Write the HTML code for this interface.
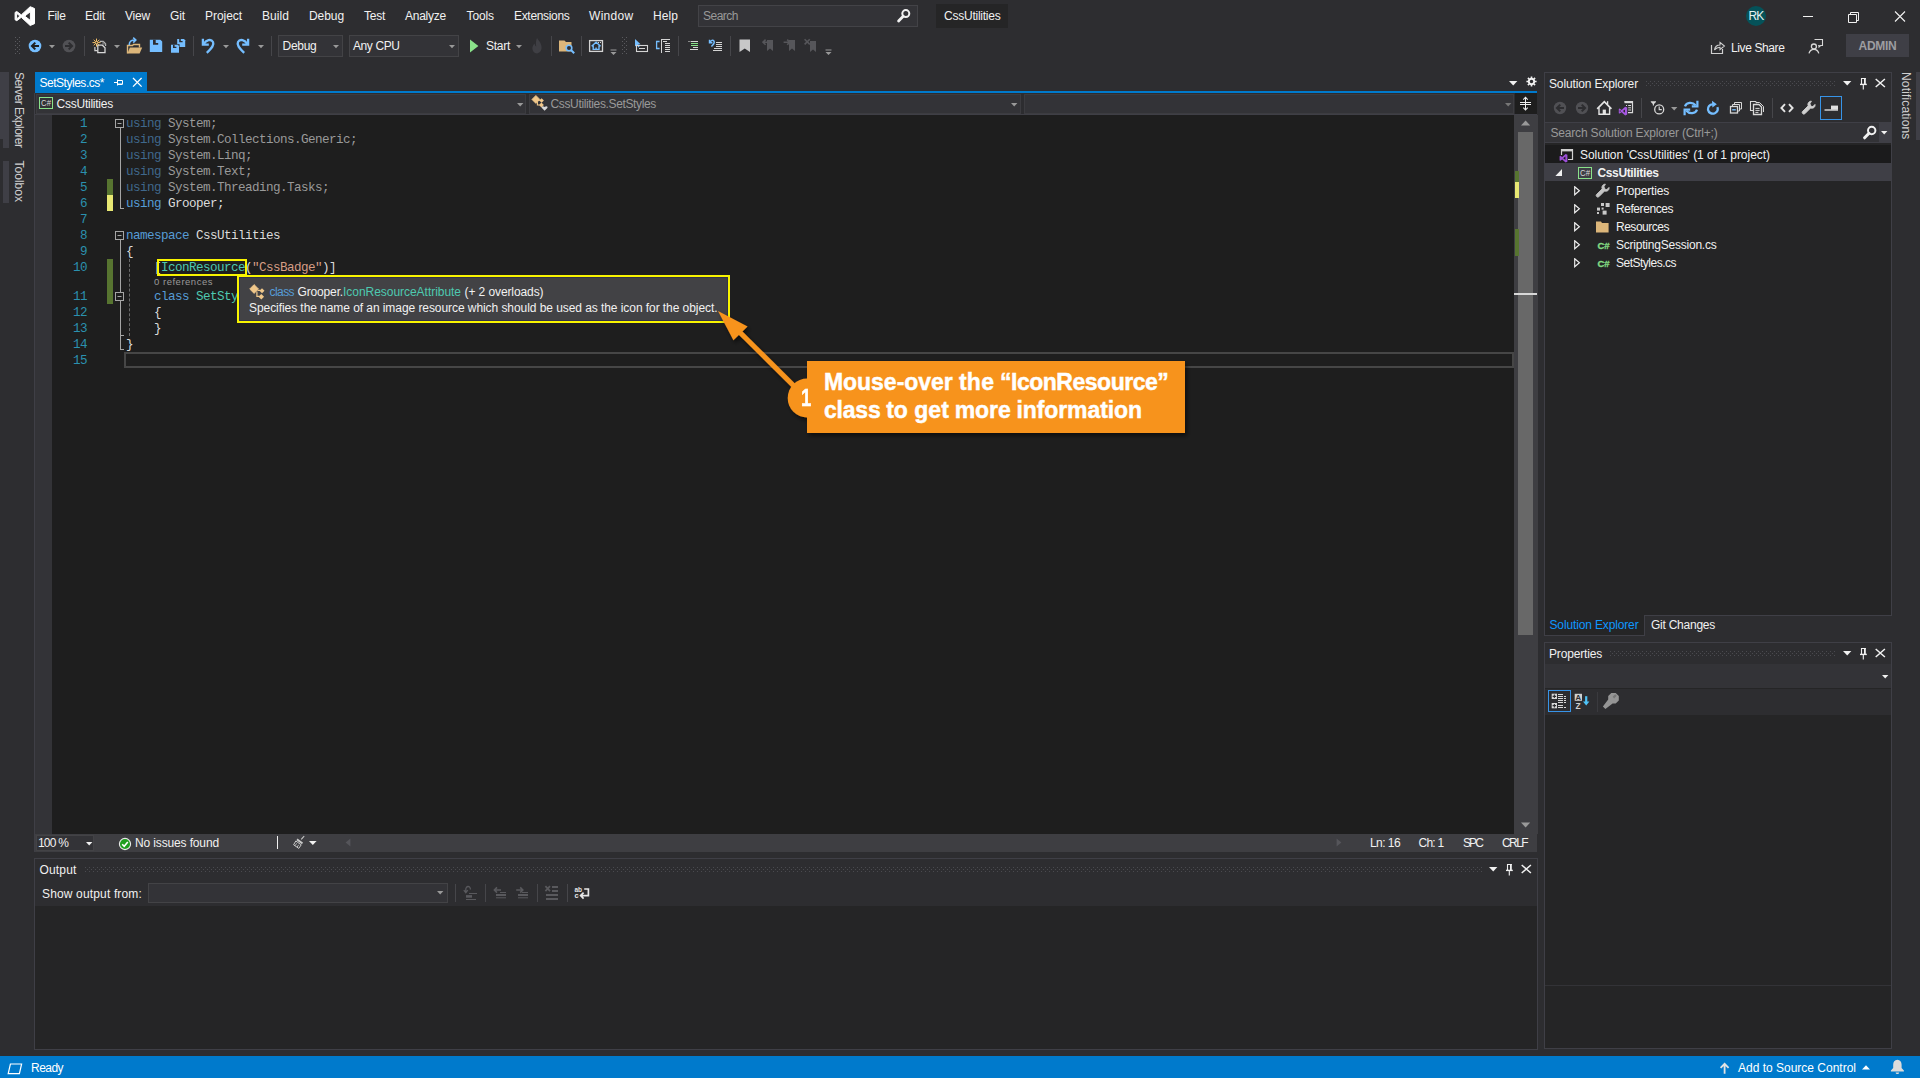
<!DOCTYPE html>
<html lang="en"><head><meta charset="utf-8"><title>CssUtilities - Microsoft Visual Studio</title>
<style>
html,body{margin:0;padding:0;background:#2d2d30;overflow:hidden}
#app{position:relative;width:1920px;height:1078px;background:#2d2d30;overflow:hidden;font-family:"Liberation Sans",sans-serif}
#app div,#app span,#app svg{position:absolute;display:block}
#app span{white-space:pre}
</style></head><body><div id="app">
<svg style="left:13px;top:5px;" width="24" height="22" viewBox="0 0 24 22"><path d="M17.2 1.7 L8.3 9.9 L3.8 6.5 L2.1 7.4 V14.8 L3.8 15.7 L8.3 12.3 L17.2 20.5 L21.5 18.7 V3.5 Z M3.6 13.9 V8.3 L6.9 11.1 Z M11.7 11.1 L17.4 6.7 V15.5 Z" fill="#ffffff" fill-rule="evenodd" stroke="#ffffff" stroke-width="1" stroke-linejoin="round"/></svg>
<span style="left:47.5px;top:7.84px;font:normal 12px/16px 'Liberation Sans', sans-serif;color:#f1f1f1;white-space:pre;letter-spacing:-0.336px;">File</span>
<span style="left:85px;top:7.84px;font:normal 12px/16px 'Liberation Sans', sans-serif;color:#f1f1f1;white-space:pre;letter-spacing:-0.172px;">Edit</span>
<span style="left:125px;top:7.84px;font:normal 12px/16px 'Liberation Sans', sans-serif;color:#f1f1f1;white-space:pre;letter-spacing:-0.199px;">View</span>
<span style="left:170px;top:7.84px;font:normal 12px/16px 'Liberation Sans', sans-serif;color:#f1f1f1;white-space:pre;letter-spacing:-0.115px;">Git</span>
<span style="left:205px;top:7.84px;font:normal 12px/16px 'Liberation Sans', sans-serif;color:#f1f1f1;white-space:pre;letter-spacing:-0.051px;">Project</span>
<span style="left:262px;top:7.84px;font:normal 12px/16px 'Liberation Sans', sans-serif;color:#f1f1f1;white-space:pre;letter-spacing:0.062px;">Build</span>
<span style="left:309px;top:7.84px;font:normal 12px/16px 'Liberation Sans', sans-serif;color:#f1f1f1;white-space:pre;letter-spacing:-0.075px;">Debug</span>
<span style="left:364px;top:7.84px;font:normal 12px/16px 'Liberation Sans', sans-serif;color:#f1f1f1;white-space:pre;letter-spacing:-0.254px;">Test</span>
<span style="left:405px;top:7.84px;font:normal 12px/16px 'Liberation Sans', sans-serif;color:#f1f1f1;white-space:pre;letter-spacing:-0.243px;">Analyze</span>
<span style="left:466.5px;top:7.84px;font:normal 12px/16px 'Liberation Sans', sans-serif;color:#f1f1f1;white-space:pre;letter-spacing:-0.103px;">Tools</span>
<span style="left:514px;top:7.84px;font:normal 12px/16px 'Liberation Sans', sans-serif;color:#f1f1f1;white-space:pre;letter-spacing:-0.320px;">Extensions</span>
<span style="left:589px;top:7.84px;font:normal 12px/16px 'Liberation Sans', sans-serif;color:#f1f1f1;white-space:pre;letter-spacing:0.302px;">Window</span>
<span style="left:653px;top:7.84px;font:normal 12px/16px 'Liberation Sans', sans-serif;color:#f1f1f1;white-space:pre;letter-spacing:0.078px;">Help</span>
<div style="left:698px;top:5px;width:220px;height:22px;background:#333337;border:1px solid #434347;box-sizing:border-box;"></div>
<span style="left:703px;top:7.84px;font:normal 12px/16px 'Liberation Sans', sans-serif;color:#999999;white-space:pre;letter-spacing:-0.505px;">Search</span>
<svg style="left:896px;top:8px;" width="16" height="16" viewBox="0 0 16 16"><circle cx="9.8" cy="5.6" r="3.5" fill="none" stroke="#f1f1f1" stroke-width="2"/><path d="M7.2 8.3 L2.6 13" stroke="#f1f1f1" stroke-width="2.8" stroke-linecap="round"/></svg>
<div style="left:936px;top:4px;width:72px;height:24px;background:#252526;"></div>
<span style="left:944px;top:7.84px;font:normal 12px/16px 'Liberation Sans', sans-serif;color:#f1f1f1;white-space:pre;letter-spacing:-0.237px;">CssUtilities</span>
<div style="left:1745.5px;top:6px;width:20px;height:20px;background:#055259;border-radius:10px;"></div>
<span style="left:1748.5px;top:7.84px;font:normal 12px/16px 'Liberation Sans', sans-serif;color:#e6f2f2;white-space:pre;letter-spacing:-0.836px;">RK</span>
<svg style="left:1800px;top:8px;" width="16" height="16" viewBox="0 0 16 16"><path d="M3 8.5 H13" stroke="#f1f1f1" stroke-width="1"/></svg>
<svg style="left:1846px;top:8.5px;" width="16" height="16" viewBox="0 0 16 16"><path d="M2.5 5.5 H10.5 V13.5 H2.5 Z M4.5 5.5 V3.5 H12.5 V11.5 H10.5" fill="none" stroke="#f1f1f1" stroke-width="1"/></svg>
<svg style="left:1892px;top:8px;" width="16" height="16" viewBox="0 0 16 16"><path d="M3 3.5 L13 13.5 M13 3.5 L3 13.5" stroke="#f1f1f1" stroke-width="1.1"/></svg>
<svg style="left:15px;top:37px;" width="5" height="18" viewBox="0 0 5 18"><rect x="0" y="0" width="1" height="1" fill="#5a5a5e"/><rect x="2" y="2" width="1" height="1" fill="#5a5a5e"/><rect x="4" y="0" width="1" height="1" fill="#5a5a5e"/><rect x="0" y="4" width="1" height="1" fill="#5a5a5e"/><rect x="2" y="6" width="1" height="1" fill="#5a5a5e"/><rect x="4" y="4" width="1" height="1" fill="#5a5a5e"/><rect x="0" y="8" width="1" height="1" fill="#5a5a5e"/><rect x="2" y="10" width="1" height="1" fill="#5a5a5e"/><rect x="4" y="8" width="1" height="1" fill="#5a5a5e"/><rect x="0" y="12" width="1" height="1" fill="#5a5a5e"/><rect x="2" y="14" width="1" height="1" fill="#5a5a5e"/><rect x="4" y="12" width="1" height="1" fill="#5a5a5e"/><rect x="0" y="16" width="1" height="1" fill="#5a5a5e"/><rect x="2" y="18" width="1" height="1" fill="#5a5a5e"/><rect x="4" y="16" width="1" height="1" fill="#5a5a5e"/></svg>
<svg style="left:27px;top:38px;" width="16" height="16" viewBox="0 0 16 16"><circle cx="8" cy="8" r="6.3" fill="#75beff"/><path d="M12 8 H5.4 M8.3 4.6 L4.9 8 L8.3 11.4" stroke="#1e1e1e" stroke-width="2" fill="none"/></svg>
<svg style="left:49px;top:45px;" width="7" height="4" viewBox="0 0 7 4"><path d="M0 0 H6 L3 3.2 Z" fill="#999999"/></svg>
<svg style="left:61px;top:38px;" width="16" height="16" viewBox="0 0 16 16"><circle cx="8" cy="8" r="6.3" fill="#515155"/><path d="M4 8 H10.6 M7.7 4.6 L11.1 8 L7.7 11.4" stroke="#2d2d30" stroke-width="2" fill="none"/></svg>
<div style="left:84px;top:36px;width:1px;height:20px;background:#46464a;"></div>
<svg style="left:92px;top:37px;" width="18" height="18" viewBox="0 0 18 18"><path d="M7.6 4.4 H11.2 L13.6 6.8 V9" fill="none" stroke="#b8b8b8" stroke-width="1.2"/>
    <path d="M11 4.4 V7 H13.6" fill="none" stroke="#8a8a8a" stroke-width="1"/>
    <path d="M2.9 10 V13.6 H5.4" fill="none" stroke="#d0d0d0" stroke-width="1.2"/>
    <path d="M5.8 8.2 H10.4 L13 10.8 V15.6 H5.8 Z" fill="#2d2d30" stroke="#d8d8d8" stroke-width="1.3"/>
    <path d="M4.5 1.6 V9.6 M0.5 5.6 H8.5 M1.7 2.8 L7.3 8.4 M7.3 2.8 L1.7 8.4" stroke="#f5c169" stroke-width="1"/><circle cx="4.5" cy="5.6" r="1.2" fill="#2d2d30" stroke="#f5c169" stroke-width="0.8"/></svg>
<svg style="left:114px;top:45px;" width="7" height="4" viewBox="0 0 7 4"><path d="M0 0 H6 L3 3.2 Z" fill="#999999"/></svg>
<svg style="left:126px;top:37px;" width="18" height="18" viewBox="0 0 18 18"><path d="M1.5 16.5 V8.5 H6.5 L7.5 7.5 H13.5 V10.5" fill="none" stroke="#dcb67a" stroke-width="1.4"/>
    <path d="M3.8 10.5 H16.2 L13.6 16.5 H1.5 Z" fill="#dcb67a"/>
    <path d="M3.2 8 C3.2 4 6 2.8 9.2 3 M7.2 0.6 L9.8 3 L7.2 5.6" fill="none" stroke="#75beff" stroke-width="1.6"/></svg>
<svg style="left:149px;top:39px;" width="14" height="14" viewBox="0 0 14 14"><path d="M0.8 0.7 H11.4 L13.2 2.5 V13 H0.8 Z" fill="#75beff"/><path d="M4 0.7 H6.7 V4 H9.2 V5.8 H4 Z" fill="#2d2d30"/></svg>
<svg style="left:170px;top:37px;" width="17" height="18" viewBox="0 0 17 18"><path d="M7.2 2 H14 L15.2 3.2 V10 H7.2 Z" fill="#75beff"/><path d="M9.2 2 H10.8 V4 H12.6 V5.2 H9.2 Z" fill="#2d2d30"/>
    <path d="M0.4 7.2 H9.6 V16.4 H0.4 Z" fill="#2d2d30"/><path d="M1 7.8 H7.8 L9 9 V15.8 H1 Z" fill="#75beff"/><path d="M3 7.8 H4.6 V9.8 H6.4 V11 H3 Z" fill="#2d2d30"/></svg>
<div style="left:193px;top:36px;width:1px;height:20px;background:#46464a;"></div>
<svg style="left:200px;top:37px;" width="16" height="18" viewBox="0 0 16 18"><path d="M2.9 1.8 V7.6 H8.8" fill="none" stroke="#75beff" stroke-width="2.3"/><path d="M3.6 7.2 C6 3 11 1.4 13 5 C14.5 8 12 11 6.8 15.8" fill="none" stroke="#75beff" stroke-width="2.3"/></svg>
<svg style="left:223px;top:45px;" width="7" height="4" viewBox="0 0 7 4"><path d="M0 0 H6 L3 3.2 Z" fill="#999999"/></svg>
<svg style="left:235px;top:37px;" width="16" height="18" viewBox="0 0 16 18"><path d="M13.1 1.8 V7.6 H7.2" fill="none" stroke="#75beff" stroke-width="2.3"/><path d="M12.4 7.2 C10 3 5 1.4 3 5 C1.5 8 4 11 9.2 15.8" fill="none" stroke="#75beff" stroke-width="2.3"/></svg>
<svg style="left:258px;top:45px;" width="7" height="4" viewBox="0 0 7 4"><path d="M0 0 H6 L3 3.2 Z" fill="#999999"/></svg>
<div style="left:271px;top:36px;width:1px;height:20px;background:#46464a;"></div>
<div style="left:278px;top:35px;width:65px;height:22px;background:#333337;border:1px solid #434346;box-sizing:border-box;"></div>
<span style="left:282.5px;top:37.84px;font:normal 12px/16px 'Liberation Sans', sans-serif;color:#f1f1f1;white-space:pre;letter-spacing:-0.275px;">Debug</span>
<svg style="left:333px;top:45px;" width="7" height="4" viewBox="0 0 7 4"><path d="M0 0 H6 L3 3.2 Z" fill="#999999"/></svg>
<div style="left:349px;top:35px;width:110px;height:22px;background:#333337;border:1px solid #434346;box-sizing:border-box;"></div>
<span style="left:353px;top:37.84px;font:normal 12px/16px 'Liberation Sans', sans-serif;color:#f1f1f1;white-space:pre;letter-spacing:-0.408px;">Any CPU</span>
<svg style="left:449px;top:45px;" width="7" height="4" viewBox="0 0 7 4"><path d="M0 0 H6 L3 3.2 Z" fill="#999999"/></svg>
<svg style="left:469px;top:39px;" width="10" height="14" viewBox="0 0 10 14"><path d="M1 0.6 L9.4 7 L1 13.4 Z" fill="#8ae28a"/></svg>
<span style="left:486px;top:37.84px;font:normal 12px/16px 'Liberation Sans', sans-serif;color:#f1f1f1;white-space:pre;letter-spacing:-0.269px;">Start</span>
<svg style="left:516px;top:45px;" width="7" height="4" viewBox="0 0 7 4"><path d="M0 0 H6 L3 3.2 Z" fill="#999999"/></svg>
<svg style="left:531px;top:37px;" width="12" height="18" viewBox="0 0 12 18"><path d="M6 1 C8 4 10.6 6.4 10.6 10.6 C10.6 14 8.4 16.4 6 16.4 C3.4 16.4 1.4 14.2 1.4 11 C1.4 9 2.6 7.4 3.6 6.4 C3.8 8 4.4 9 5.2 9.4 C4.6 6 5 3 6 1 Z" fill="#3f3f44"/></svg>
<div style="left:551px;top:36px;width:1px;height:20px;background:#46464a;"></div>
<svg style="left:558px;top:38px;" width="18" height="18" viewBox="0 0 18 18"><path d="M1 2.5 H6.5 L8 4 H13.5 V13.5 H1 Z" fill="#dcb67a"/><circle cx="11" cy="10" r="2.8" fill="#2d2d30" stroke="#75beff" stroke-width="1.6"/><path d="M13 12 L16.2 15.2" stroke="#75beff" stroke-width="2"/></svg>
<div style="left:581px;top:36px;width:1px;height:20px;background:#46464a;"></div>
<svg style="left:588px;top:39px;" width="16" height="14" viewBox="0 0 16 14"><rect x="1.6" y="1.6" width="12.9" height="10.8" fill="none" stroke="#d4d4d4" stroke-width="1.3"/><path d="M3.6 7.2 L8.1 3.3 L12.6 7.2 M5.2 6.4 V10.4 H11 V6.4 M8.1 10.4 V8.4" fill="none" stroke="#75beff" stroke-width="1.4"/><rect x="10" y="3" width="1" height="1" fill="#d4d4d4"/><rect x="12" y="3" width="1" height="1" fill="#d4d4d4"/></svg>
<svg style="left:610px;top:49px;" width="8" height="7" viewBox="0 0 8 7"><path d="M0.5 0.5 H6.5 V1.5 H0.5 Z M0.5 3 H6.5 L3.5 6 Z" fill="#999"/></svg>
<svg style="left:622px;top:37px;" width="5" height="18" viewBox="0 0 5 18"><rect x="0" y="0" width="1" height="1" fill="#5a5a5e"/><rect x="2" y="2" width="1" height="1" fill="#5a5a5e"/><rect x="4" y="0" width="1" height="1" fill="#5a5a5e"/><rect x="0" y="4" width="1" height="1" fill="#5a5a5e"/><rect x="2" y="6" width="1" height="1" fill="#5a5a5e"/><rect x="4" y="4" width="1" height="1" fill="#5a5a5e"/><rect x="0" y="8" width="1" height="1" fill="#5a5a5e"/><rect x="2" y="10" width="1" height="1" fill="#5a5a5e"/><rect x="4" y="8" width="1" height="1" fill="#5a5a5e"/><rect x="0" y="12" width="1" height="1" fill="#5a5a5e"/><rect x="2" y="14" width="1" height="1" fill="#5a5a5e"/><rect x="4" y="12" width="1" height="1" fill="#5a5a5e"/><rect x="0" y="16" width="1" height="1" fill="#5a5a5e"/><rect x="2" y="18" width="1" height="1" fill="#5a5a5e"/><rect x="4" y="16" width="1" height="1" fill="#5a5a5e"/></svg>
<svg style="left:633px;top:38px;" width="18" height="16" viewBox="0 0 18 16"><path d="M2 1 V8.6 L4 7 L5.4 9.4 L6.6 8.6 L5.2 6.4 L7.6 6.2 Z" fill="#75beff"/><rect x="3.5" y="7.5" width="11" height="6" fill="none" stroke="#d4d4d4" stroke-width="1.1"/><path d="M6 10.5 H12" stroke="#d4d4d4" stroke-width="1"/></svg>
<svg style="left:655px;top:38px;" width="18" height="16" viewBox="0 0 18 16"><path d="M4.6 3.5 H1.6 V10.5 H4.6" fill="none" stroke="#75beff" stroke-width="1.3"/><path d="M6.5 1 V15 M6.5 1.5 H15 M8 3.5 H12 M10 5.5 H15 M10 7.5 H15 M10 9.5 H15 M10 11.5 H15 M10 13.5 H15" fill="none" stroke="#d4d4d4" stroke-width="1"/></svg>
<div style="left:678px;top:36px;width:1px;height:20px;background:#46464a;"></div>
<svg style="left:687px;top:40px;" width="14" height="12" viewBox="0 0 14 12"><path d="M1 1.5 H3" stroke="#8a8a8a" stroke-width="1"/><path d="M3.6 1.5 H11 M6 7.5 H11 M3 9.5 H11" stroke="#d4d4d4" stroke-width="1"/><path d="M4 3.5 H11 M4 5.5 H11" stroke="#8ae28a" stroke-width="1"/></svg>
<svg style="left:708px;top:39px;" width="16" height="14" viewBox="0 0 16 14"><path d="M1.5 0.8 V3.8 H4.4" fill="none" stroke="#75beff" stroke-width="1.4"/><path d="M2 3.4 C3 0.4 6.6 0.8 6.2 3.6 C6 5.2 4.8 6 3.4 7.6" fill="none" stroke="#75beff" stroke-width="1.5"/><path d="M8 3.5 H14 M8 5.5 H14 M8 7.5 H14 M6 9.5 H14 M5 11.5 H14" stroke="#d4d4d4" stroke-width="1"/></svg>
<div style="left:730px;top:36px;width:1px;height:20px;background:#46464a;"></div>
<svg style="left:739px;top:39px;" width="12" height="14" viewBox="0 0 12 14"><path d="M0.5 0.5 H11 V13 L5.75 9.6 L0.5 13 Z" fill="#c8c8c8"/></svg>
<svg style="left:762px;top:38px;" width="13" height="15" viewBox="0 0 13 15"><path d="M5 2 H11 V13 L8 10.6 L5 13 Z" fill="#56565a"/><path d="M7 4.2 H1.2 M3.6 1.6 L1 4.2 L3.6 6.8" stroke="#56565a" stroke-width="1.6" fill="none"/></svg>
<svg style="left:783px;top:38px;" width="13" height="15" viewBox="0 0 13 15"><path d="M6 2 H12 V13 L9 10.6 L6 13 Z" fill="#56565a"/><path d="M0.6 4.2 H6.6 M4.2 1.6 L6.8 4.2 L4.2 6.8" stroke="#56565a" stroke-width="1.6" fill="none"/></svg>
<svg style="left:804px;top:38px;" width="13" height="15" viewBox="0 0 13 15"><path d="M6 3 H12 V14 L9 11.6 L6 14 Z" fill="#56565a"/><path d="M0.6 1.2 L5.8 6.4 M5.8 1.2 L0.6 6.4" stroke="#56565a" stroke-width="1.6" fill="none"/></svg>
<svg style="left:825px;top:49px;" width="8" height="7" viewBox="0 0 8 7"><path d="M0.5 0.5 H6.5 V1.5 H0.5 Z M0.5 3 H6.5 L3.5 6 Z" fill="#999"/></svg>
<svg style="left:1708px;top:39px;" width="18" height="16" viewBox="0 0 18 16"><path d="M3.5 6 V14.5 H14.5 V10" fill="none" stroke="#d0d0d0" stroke-width="1.2"/><path d="M6.5 11 C7 7.6 9.4 6 12 6 V3.4 L16.4 7 L12 10.6 V8.2 C9.6 8.2 8 9 6.5 11 Z" fill="none" stroke="#d0d0d0" stroke-width="1.1"/></svg>
<span style="left:1731px;top:40.34px;font:normal 12px/16px 'Liberation Sans', sans-serif;color:#f1f1f1;white-space:pre;letter-spacing:-0.388px;">Live Share</span>
<svg style="left:1808px;top:37px;" width="18" height="18" viewBox="0 0 18 18"><path d="M6.5 2.5 H14.5 V8.5 H12.6 L11 10 V8.5 H10.2" fill="none" stroke="#d8d8d8" stroke-width="1.1"/><circle cx="5.9" cy="9.5" r="2.5" fill="none" stroke="#d8d8d8" stroke-width="1.3"/><path d="M1 16.4 C1.8 13.6 3.6 12.4 5.9 12.4 C8.2 12.4 10 13.6 10.8 16.4" fill="none" stroke="#d8d8d8" stroke-width="1.3"/></svg>
<div style="left:1846px;top:34px;width:63px;height:23px;background:#3f3f46;"></div>
<span style="left:1858.5px;top:38.34px;font:bold 12px/16px 'Liberation Sans', sans-serif;color:#9d9da1;white-space:pre;letter-spacing:-0.266px;">ADMIN</span>
<div style="left:3px;top:72px;width:6px;height:76px;background:#3f3f46;"></div>
<div style="left:0px;top:72px;width:3px;height:67px;background:#3f3f46;"></div>
<div style="left:3px;top:161px;width:6px;height:42px;background:#3f3f46;"></div>
<span style="left:0;top:0;font:normal 12px/16px 'Liberation Sans', sans-serif;color:#d0d0d0;white-space:pre;transform-origin:0 0;transform:translate(26.8px,72px) rotate(90deg);letter-spacing:-0.525px;">Server Explorer</span>
<span style="left:0;top:0;font:normal 12px/16px 'Liberation Sans', sans-serif;color:#d0d0d0;white-space:pre;transform-origin:0 0;transform:translate(26.8px,160.5px) rotate(90deg);letter-spacing:0.018px;">Toolbox</span>
<div style="left:35px;top:72px;width:112px;height:19px;background:#007acc;"></div>
<span style="left:39.5px;top:74.84px;font:normal 12px/16px 'Liberation Sans', sans-serif;color:#ffffff;white-space:pre;letter-spacing:-0.477px;">SetStyles.cs*</span>
<svg style="left:113px;top:77px;" width="12" height="11" viewBox="0 0 12 11"><path d="M1 5.5 H4.5 M4.5 2.5 V8.5 M4.5 3.5 H9.5 V7 H4.5 M4.5 7.5 H9.5" fill="none" stroke="#ffffff" stroke-width="1"/></svg>
<svg style="left:132px;top:77px;" width="11" height="11" viewBox="0 0 11 11"><path d="M1 1 L9.6 9.6 M9.6 1 L1 9.6" stroke="#ffffff" stroke-width="1.3"/></svg>
<div style="left:35px;top:91px;width:1502px;height:2px;background:#007acc;"></div>
<svg style="left:1509px;top:81px;" width="9" height="5" viewBox="0 0 9 5"><path d="M0 0 H8.4 L4.2 4.4 Z" fill="#f1f1f1"/></svg>
<svg style="left:1525.5px;top:75.5px;" width="11" height="11" viewBox="0 0 11 11"><circle cx="5.5" cy="5.5" r="2.7" fill="none" stroke="#f1f1f1" stroke-width="1.9"/><path d="M5.5 0.4 V2 M5.5 9 V10.6 M0.4 5.5 H2 M9 5.5 H10.6 M1.9 1.9 L3 3 M8 8 L9.1 9.1 M9.1 1.9 L8 3 M3 8 L1.9 9.1" stroke="#f1f1f1" stroke-width="1.6"/></svg>
<div style="left:35px;top:93px;width:1502px;height:22px;background:#2d2d30;"></div>
<div style="left:35px;top:114px;width:1502px;height:1px;background:#3f3f46;"></div>
<div style="left:36px;top:94px;width:490px;height:20px;background:#333337;border:1px solid #3c3c40;box-sizing:border-box;"></div>
<div style="left:529px;top:94px;width:492px;height:20px;background:#333337;border:1px solid #3c3c40;box-sizing:border-box;"></div>
<div style="left:1024px;top:94px;width:490px;height:20px;background:#333337;border:1px solid #3c3c40;box-sizing:border-box;"></div>
<svg style="left:39px;top:97px" width="15" height="13" viewBox="0 0 15 13"><rect x="0.5" y="0.5" width="13" height="11" fill="none" stroke="#8ae28a" stroke-width="1"/><text x="2" y="9.2" font-family="Liberation Sans, sans-serif" font-size="8.6" fill="#d8d8d8" textLength="10" lengthAdjust="spacingAndGlyphs">C#</text></svg>
<span style="left:56.5px;top:95.84px;font:normal 12px/16px 'Liberation Sans', sans-serif;color:#f1f1f1;white-space:pre;letter-spacing:-0.237px;">CssUtilities</span>
<svg style="left:517px;top:103px;" width="7" height="4" viewBox="0 0 7 4"><path d="M0 0 H6.4 L3.2 3.4 Z" fill="#999"/></svg>
<svg style="left:531px;top:94px;" width="18" height="18" viewBox="0 0 18 18"><path d="M4.9 1.4 L8.9 5.4 L4.9 9.4 L0.9 5.4 Z" fill="#f0c78a" stroke="#f0c78a" stroke-width="0.7" stroke-linejoin="round"/><path d="M10.6 4.2 L12.9 6.5 L10.6 8.8 L8.3 6.5 Z" fill="#f0c78a"/><path d="M10.4 8.6 L12.8 11 L10.4 13.4 L8 11 Z" fill="#f0c78a"/><path d="M7 6.3 H9 M6.4 7.4 V11 H8.6" fill="none" stroke="#f0c78a" stroke-width="1.1"/>
    <path d="M13.6 16.8 L10.9 14 C9.9 12.6 11.8 11.2 13.6 13 C15.4 11.2 17.3 12.6 16.3 14 Z" fill="#d8d8d8"/></svg>
<span style="left:550.5px;top:95.84px;font:normal 12px/16px 'Liberation Sans', sans-serif;color:#999999;white-space:pre;letter-spacing:-0.358px;">CssUtilities.SetStyles</span>
<svg style="left:1011px;top:103px;" width="7" height="4" viewBox="0 0 7 4"><path d="M0 0 H6.4 L3.2 3.4 Z" fill="#999"/></svg>
<svg style="left:1504.5px;top:103px;" width="7" height="4" viewBox="0 0 7 4"><path d="M0 0 H6.4 L3.2 3.4 Z" fill="#777"/></svg>
<div style="left:1515px;top:93px;width:22px;height:21px;background:#1e1e1e;"></div>
<svg style="left:1519px;top:96px;" width="14" height="16" viewBox="0 0 14 16"><path d="M6.5 1.2 V14 M1 6.5 H12 M1 8.5 H12" stroke="#f1f1f1" stroke-width="1"/><path d="M4.3 3.6 L6.5 1.2 L8.7 3.6 M4.3 11.6 L6.5 14 L8.7 11.6" fill="none" stroke="#f1f1f1" stroke-width="1.1"/></svg>
<div style="left:35px;top:115px;width:1480px;height:719px;background:#1e1e1e;"></div>
<div style="left:35px;top:115px;width:17px;height:719px;background:#333337;"></div>
<div style="left:34px;top:93px;width:1px;height:759px;background:#3f3f46;"></div>
<div style="left:1514px;top:115px;width:24px;height:719px;background:#3e3e42;"></div>
<svg style="left:1521px;top:120px;" width="10" height="6" viewBox="0 0 10 6"><path d="M0 5.4 L4.6 0.4 L9.2 5.4 Z" fill="#999"/></svg>
<svg style="left:1521px;top:822px;" width="10" height="6" viewBox="0 0 10 6"><path d="M0 0.4 L4.6 5.4 L9.2 0.4 Z" fill="#999"/></svg>
<div style="left:1518px;top:132px;width:15px;height:503px;background:#686868;"></div>
<div style="left:1515px;top:171px;width:4px;height:11px;background:#577430;"></div>
<div style="left:1515px;top:182px;width:4px;height:16px;background:#e8e873;"></div>
<div style="left:1515px;top:229px;width:4px;height:27px;background:#577430;"></div>
<div style="left:1514px;top:293px;width:23px;height:2px;background:#d8d8d8;"></div>
<div style="left:107px;top:179px;width:6px;height:16px;background:#577430;"></div>
<div style="left:107px;top:195px;width:6px;height:16px;background:#e8e873;"></div>
<div style="left:107px;top:259px;width:6px;height:45px;background:#577430;"></div>
<span style="left:80px;top:115.64px;font:normal 12.6px/16px 'Liberation Mono', monospace;color:#2b91af;white-space:pre;letter-spacing:0;letter-spacing:-0.562px;">1</span>
<span style="left:126px;top:115.64px;font:normal 12.6px/16px 'Liberation Mono', monospace;color:#40688c;white-space:pre;letter-spacing:-0.559px;">using</span>
<span style="left:168px;top:115.64px;font:normal 12.6px/16px 'Liberation Mono', monospace;color:#9a9a9a;white-space:pre;letter-spacing:-0.558px;">System;</span>
<span style="left:80px;top:131.64px;font:normal 12.6px/16px 'Liberation Mono', monospace;color:#2b91af;white-space:pre;letter-spacing:0;letter-spacing:-0.562px;">2</span>
<span style="left:126px;top:131.64px;font:normal 12.6px/16px 'Liberation Mono', monospace;color:#40688c;white-space:pre;letter-spacing:-0.559px;">using</span>
<span style="left:168px;top:131.64px;font:normal 12.6px/16px 'Liberation Mono', monospace;color:#9a9a9a;white-space:pre;letter-spacing:-0.558px;">System.Collections.Generic;</span>
<span style="left:80px;top:147.64px;font:normal 12.6px/16px 'Liberation Mono', monospace;color:#2b91af;white-space:pre;letter-spacing:0;letter-spacing:-0.562px;">3</span>
<span style="left:126px;top:147.64px;font:normal 12.6px/16px 'Liberation Mono', monospace;color:#40688c;white-space:pre;letter-spacing:-0.559px;">using</span>
<span style="left:168px;top:147.64px;font:normal 12.6px/16px 'Liberation Mono', monospace;color:#9a9a9a;white-space:pre;letter-spacing:-0.559px;">System.Linq;</span>
<span style="left:80px;top:163.64px;font:normal 12.6px/16px 'Liberation Mono', monospace;color:#2b91af;white-space:pre;letter-spacing:0;letter-spacing:-0.562px;">4</span>
<span style="left:126px;top:163.64px;font:normal 12.6px/16px 'Liberation Mono', monospace;color:#40688c;white-space:pre;letter-spacing:-0.559px;">using</span>
<span style="left:168px;top:163.64px;font:normal 12.6px/16px 'Liberation Mono', monospace;color:#9a9a9a;white-space:pre;letter-spacing:-0.559px;">System.Text;</span>
<span style="left:80px;top:179.64px;font:normal 12.6px/16px 'Liberation Mono', monospace;color:#2b91af;white-space:pre;letter-spacing:0;letter-spacing:-0.562px;">5</span>
<span style="left:126px;top:179.64px;font:normal 12.6px/16px 'Liberation Mono', monospace;color:#40688c;white-space:pre;letter-spacing:-0.559px;">using</span>
<span style="left:168px;top:179.64px;font:normal 12.6px/16px 'Liberation Mono', monospace;color:#9a9a9a;white-space:pre;letter-spacing:-0.558px;">System.Threading.Tasks;</span>
<span style="left:80px;top:195.64px;font:normal 12.6px/16px 'Liberation Mono', monospace;color:#2b91af;white-space:pre;letter-spacing:0;letter-spacing:-0.562px;">6</span>
<span style="left:126px;top:195.64px;font:normal 12.6px/16px 'Liberation Mono', monospace;color:#569cd6;white-space:pre;letter-spacing:-0.559px;">using</span>
<span style="left:168px;top:195.64px;font:normal 12.6px/16px 'Liberation Mono', monospace;color:#dcdcdc;white-space:pre;letter-spacing:-0.559px;">Grooper;</span>
<span style="left:80px;top:211.64px;font:normal 12.6px/16px 'Liberation Mono', monospace;color:#2b91af;white-space:pre;letter-spacing:0;letter-spacing:-0.562px;">7</span>
<span style="left:80px;top:227.64px;font:normal 12.6px/16px 'Liberation Mono', monospace;color:#2b91af;white-space:pre;letter-spacing:0;letter-spacing:-0.562px;">8</span>
<span style="left:126px;top:227.64px;font:normal 12.6px/16px 'Liberation Mono', monospace;color:#569cd6;white-space:pre;letter-spacing:-0.559px;">namespace</span>
<span style="left:196px;top:227.64px;font:normal 12.6px/16px 'Liberation Mono', monospace;color:#dcdcdc;white-space:pre;letter-spacing:-0.559px;">CssUtilities</span>
<span style="left:80px;top:243.64px;font:normal 12.6px/16px 'Liberation Mono', monospace;color:#2b91af;white-space:pre;letter-spacing:0;letter-spacing:-0.562px;">9</span>
<span style="left:126px;top:243.64px;font:normal 12.6px/16px 'Liberation Mono', monospace;color:#dcdcdc;white-space:pre;letter-spacing:-0.562px;">{</span>
<span style="left:73px;top:259.64px;font:normal 12.6px/16px 'Liberation Mono', monospace;color:#2b91af;white-space:pre;letter-spacing:0;letter-spacing:-0.562px;">10</span>
<span style="left:126px;top:259.64px;font:normal 12.6px/16px 'Liberation Mono', monospace;color:#dcdcdc;white-space:pre;letter-spacing:-0.559px;">    [</span>
<span style="left:161px;top:259.64px;font:normal 12.6px/16px 'Liberation Mono', monospace;color:#4ec9b0;white-space:pre;letter-spacing:-0.559px;">IconResource</span>
<span style="left:245px;top:259.64px;font:normal 12.6px/16px 'Liberation Mono', monospace;color:#dcdcdc;white-space:pre;letter-spacing:-0.562px;">(</span>
<span style="left:252px;top:259.64px;font:normal 12.6px/16px 'Liberation Mono', monospace;color:#d69d85;white-space:pre;letter-spacing:-0.558px;">"CssBadge"</span>
<span style="left:322px;top:259.64px;font:normal 12.6px/16px 'Liberation Mono', monospace;color:#dcdcdc;white-space:pre;letter-spacing:-0.562px;">)]</span>
<span style="left:154px;top:273.71px;font:normal 9.5px/16px 'Liberation Sans', sans-serif;color:#999999;white-space:pre;letter-spacing:0.516px;">0 references</span>
<span style="left:73px;top:288.64px;font:normal 12.6px/16px 'Liberation Mono', monospace;color:#2b91af;white-space:pre;letter-spacing:0;letter-spacing:-0.562px;">11</span>
<span style="left:154px;top:288.64px;font:normal 12.6px/16px 'Liberation Mono', monospace;color:#569cd6;white-space:pre;letter-spacing:-0.559px;">class</span>
<span style="left:196px;top:288.64px;font:normal 12.6px/16px 'Liberation Mono', monospace;color:#4ec9b0;white-space:pre;letter-spacing:-0.559px;">SetStyles</span>
<span style="left:73px;top:304.64px;font:normal 12.6px/16px 'Liberation Mono', monospace;color:#2b91af;white-space:pre;letter-spacing:0;letter-spacing:-0.562px;">12</span>
<span style="left:126px;top:304.64px;font:normal 12.6px/16px 'Liberation Mono', monospace;color:#dcdcdc;white-space:pre;letter-spacing:-0.559px;">    {</span>
<span style="left:73px;top:320.64px;font:normal 12.6px/16px 'Liberation Mono', monospace;color:#2b91af;white-space:pre;letter-spacing:0;letter-spacing:-0.562px;">13</span>
<span style="left:126px;top:320.64px;font:normal 12.6px/16px 'Liberation Mono', monospace;color:#dcdcdc;white-space:pre;letter-spacing:-0.559px;">    }</span>
<span style="left:73px;top:336.64px;font:normal 12.6px/16px 'Liberation Mono', monospace;color:#2b91af;white-space:pre;letter-spacing:0;letter-spacing:-0.562px;">14</span>
<span style="left:126px;top:336.64px;font:normal 12.6px/16px 'Liberation Mono', monospace;color:#dcdcdc;white-space:pre;letter-spacing:-0.562px;">}</span>
<span style="left:73px;top:352.64px;font:normal 12.6px/16px 'Liberation Mono', monospace;color:#2b91af;white-space:pre;letter-spacing:0;letter-spacing:-0.562px;">15</span>
<div style="left:120px;top:128px;width:1px;height:81px;background:#a5a5a5;"></div>
<div style="left:120px;top:208px;width:4px;height:1px;background:#a5a5a5;"></div>
<div style="left:120px;top:240px;width:1px;height:110px;background:#a5a5a5;"></div>
<div style="left:120px;top:349px;width:4px;height:1px;background:#a5a5a5;"></div>
<div style="left:120px;top:335px;width:4px;height:1px;background:#a5a5a5;"></div>
<svg style="left:115px;top:119px;" width="10" height="10" viewBox="0 0 10 10"><rect x="0.5" y="0.5" width="8" height="8" fill="#1e1e1e" stroke="#a5a5a5" stroke-width="1"/><path d="M2.5 4.5 H6.5" stroke="#a5a5a5" stroke-width="1"/></svg>
<svg style="left:115px;top:231px;" width="10" height="10" viewBox="0 0 10 10"><rect x="0.5" y="0.5" width="8" height="8" fill="#1e1e1e" stroke="#a5a5a5" stroke-width="1"/><path d="M2.5 4.5 H6.5" stroke="#a5a5a5" stroke-width="1"/></svg>
<svg style="left:115px;top:292px;" width="10" height="10" viewBox="0 0 10 10"><rect x="0.5" y="0.5" width="8" height="8" fill="#1e1e1e" stroke="#a5a5a5" stroke-width="1"/><path d="M2.5 4.5 H6.5" stroke="#a5a5a5" stroke-width="1"/></svg>
<div style="left:129px;top:259px;width:0;height:77px;border-left:1px dashed #6a6a6a;"></div>
<div style="left:124px;top:352px;width:1390px;height:16px;border:2px solid #464646;box-sizing:border-box;"></div>
<div style="left:35px;top:834px;width:1502px;height:18px;background:#3e3e42;"></div>
<div style="left:36px;top:835px;width:58px;height:16px;background:#333337;border:1px solid #434346;box-sizing:border-box;"></div>
<span style="left:38px;top:835.34px;font:normal 12px/16px 'Liberation Sans', sans-serif;color:#f1f1f1;white-space:pre;letter-spacing:-0.806px;">100 %</span>
<svg style="left:86px;top:842px;" width="7" height="4" viewBox="0 0 7 4"><path d="M0 0 H6.4 L3.2 3.4 Z" fill="#f1f1f1"/></svg>
<svg style="left:118px;top:836.5px;" width="14" height="14" viewBox="0 0 14 14"><circle cx="7" cy="7" r="5.6" fill="#1f9e1f" stroke="#e8e8e8" stroke-width="1.1"/><path d="M4.2 7.2 L6.2 9.2 L9.8 5" fill="none" stroke="#fff" stroke-width="1.6"/></svg>
<span style="left:135px;top:835.34px;font:normal 12px/16px 'Liberation Sans', sans-serif;color:#f1f1f1;white-space:pre;letter-spacing:-0.138px;">No issues found</span>
<div style="left:277px;top:836px;width:1px;height:13px;background:#f1f1f1;"></div>
<svg style="left:291px;top:835px;" width="15" height="15" viewBox="0 0 15 15"><path d="M13.2 1.2 L10.2 4.4" stroke="#c8c8c8" stroke-width="1.1"/><path d="M6.4 3.6 L12 7.6 L11 9.2 L5.4 5.2 Z" fill="#c8c8c8"/><path d="M4.8 6 L10.2 9.8 L7.8 13.4 L2.6 9.8 Z" fill="none" stroke="#c8c8c8" stroke-width="1"/><path d="M5.6 8.4 L4.2 10.6 M7.6 9.8 L6.2 12" stroke="#c8c8c8" stroke-width="0.9"/></svg>
<svg style="left:309px;top:841px;" width="8" height="5" viewBox="0 0 8 5"><path d="M0 0 H7.6 L3.8 4 Z" fill="#f1f1f1"/></svg>
<svg style="left:345px;top:838px;" width="6" height="9" viewBox="0 0 6 9"><path d="M5.4 0.4 L0.6 4.5 L5.4 8.6 Z" fill="#55555a"/></svg>
<svg style="left:1336px;top:838px;" width="6" height="9" viewBox="0 0 6 9"><path d="M0.6 0.4 L5.4 4.5 L0.6 8.6 Z" fill="#55555a"/></svg>
<span style="left:1370px;top:835.34px;font:normal 12px/16px 'Liberation Sans', sans-serif;color:#f1f1f1;white-space:pre;letter-spacing:-0.562px;">Ln: 16</span>
<span style="left:1418.5px;top:835.34px;font:normal 12px/16px 'Liberation Sans', sans-serif;color:#f1f1f1;white-space:pre;letter-spacing:-0.738px;">Ch: 1</span>
<span style="left:1463px;top:835.34px;font:normal 12px/16px 'Liberation Sans', sans-serif;color:#f1f1f1;white-space:pre;letter-spacing:-1.896px;">SPC</span>
<span style="left:1502px;top:835.34px;font:normal 12px/16px 'Liberation Sans', sans-serif;color:#f1f1f1;white-space:pre;letter-spacing:-1.586px;">CRLF</span>
<div style="left:34px;top:858px;width:1504px;height:192px;background:#252526;border:1px solid #3f3f46;box-sizing:border-box;"></div>
<div style="left:35px;top:859px;width:1502px;height:47px;background:#2d2d30;"></div>
<span style="left:39.5px;top:861.84px;font:normal 12px/16px 'Liberation Sans', sans-serif;color:#f1f1f1;white-space:pre;letter-spacing:0.161px;">Output</span>
<svg style="left:85px;top:867px" width="1397" height="6"><defs><pattern id="gp85869" width="4" height="4" patternUnits="userSpaceOnUse"><rect x="0" y="0" width="1" height="1" fill="#4a4a4f"/><rect x="2" y="2" width="1" height="1" fill="#4a4a4f"/></pattern></defs><rect width="1397" height="5" fill="url(#gp85869)"/></svg>
<svg style="left:1489px;top:867px;" width="9" height="5" viewBox="0 0 9 5"><path d="M0 0 H8.4 L4.2 4.4 Z" fill="#f1f1f1"/></svg>
<svg style="left:1505px;top:863px;" width="10" height="13" viewBox="0 0 10 13"><path d="M2.5 1.5 H6.8 M2.5 1 V7.4 M4.3 7.4 V12.6" fill="none" stroke="#f1f1f1" stroke-width="1.1"/><path d="M1 7.4 H7.8" stroke="#f1f1f1" stroke-width="1.4"/><path d="M5.9 1 V7.4" stroke="#f1f1f1" stroke-width="1.8"/></svg>
<svg style="left:1521px;top:864px;" width="11" height="11" viewBox="0 0 11 11"><path d="M0.7 1 L9.9 9 M9.9 1 L0.7 9" stroke="#f1f1f1" stroke-width="1.5"/></svg>
<span style="left:42px;top:885.84px;font:normal 12px/16px 'Liberation Sans', sans-serif;color:#f1f1f1;white-space:pre;letter-spacing:0.153px;">Show output from:</span>
<div style="left:148px;top:883px;width:300px;height:20px;background:#333337;border:1px solid #434346;box-sizing:border-box;"></div>
<svg style="left:437px;top:891px;" width="7" height="4" viewBox="0 0 7 4"><path d="M0 0 H6.4 L3.2 3.4 Z" fill="#999"/></svg>
<div style="left:455px;top:884px;width:1px;height:18px;background:#46464a;"></div>
<svg style="left:463px;top:885px;" width="15" height="16" viewBox="0 0 15 16"><path d="M7.4 4.4 C7.4 0.4 2.6 0.6 2.8 4.6 V7.4 M0.8 5.2 L2.8 7.8 L4.8 5.2" fill="none" stroke="#59595d" stroke-width="1.3"/><path d="M6 8.5 H14" stroke="#59595d" stroke-width="1"/><path d="M3 11.4 H9" stroke="#59595d" stroke-width="2.6"/><path d="M3 14.5 H13" stroke="#59595d" stroke-width="1"/></svg>
<div style="left:485px;top:884px;width:1px;height:18px;background:#46464a;"></div>
<svg style="left:493px;top:885px;" width="15" height="16" viewBox="0 0 15 16"><path d="M1.2 5 H8 M4 2.4 L1.4 5 L4 7.6" fill="none" stroke="#59595d" stroke-width="1.6"/><path d="M7 7.5 H13" stroke="#59595d" stroke-width="1"/><path d="M3 10 H13" stroke="#59595d" stroke-width="2"/><path d="M3 12.8 H13" stroke="#59595d" stroke-width="1"/></svg>
<svg style="left:515px;top:885px;" width="15" height="16" viewBox="0 0 15 16"><path d="M1.2 5 H8 M5.2 2.4 L7.8 5 L5.2 7.6" fill="none" stroke="#59595d" stroke-width="1.6"/><path d="M7 7.5 H13" stroke="#59595d" stroke-width="1"/><path d="M3 10 H13" stroke="#59595d" stroke-width="2"/><path d="M3 12.8 H13" stroke="#59595d" stroke-width="1"/></svg>
<div style="left:537px;top:884px;width:1px;height:18px;background:#46464a;"></div>
<svg style="left:544px;top:885px;" width="16" height="16" viewBox="0 0 16 16"><path d="M1.4 1.2 L6 6.2 M6 1.2 L1.4 6.2" stroke="#59595d" stroke-width="1.7"/><path d="M8 2 H14 M8 6 H14 M2 10 H14 M2 14 H14" stroke="#59595d" stroke-width="2"/></svg>
<div style="left:567px;top:884px;width:1px;height:18px;background:#46464a;"></div>
<svg style="left:574px;top:885px" width="17" height="16"><text x="0.4" y="6.8" font-family="Liberation Sans, sans-serif" font-size="7.4" font-weight="bold" fill="#e8e8e8" textLength="7.6" lengthAdjust="spacingAndGlyphs">ab</text><text x="0.6" y="13.4" font-family="Liberation Sans, sans-serif" font-size="7.4" font-weight="bold" fill="#e8e8e8">c</text><path d="M10.2 4 H14.4 V10.6 H6.8 M9.6 7.6 L6.6 10.6 L9.6 13.6" fill="none" stroke="#e8e8e8" stroke-width="1.7"/></svg>
<div style="left:0px;top:1056px;width:1920px;height:22px;background:#007acc;"></div>
<svg style="left:7px;top:1063px;" width="16" height="12" viewBox="0 0 16 12"><path d="M3.4 1 H14.6 L12.4 10.6 H1.2 Z" fill="none" stroke="#ffffff" stroke-width="1.2"/></svg>
<span style="left:31px;top:1059.84px;font:normal 12px/16px 'Liberation Sans', sans-serif;color:#ffffff;white-space:pre;letter-spacing:-0.537px;">Ready</span>
<svg style="left:1718.5px;top:1062px;" width="12" height="12" viewBox="0 0 12 12"><path d="M5.6 11.8 V1.8 M1.6 5.8 L5.6 1.8 L9.6 5.8" fill="none" stroke="#e2e2e2" stroke-width="1.8"/></svg>
<span style="left:1738px;top:1059.84px;font:normal 12px/16px 'Liberation Sans', sans-serif;color:#ffffff;white-space:pre;letter-spacing:-0.004px;">Add to Source Control</span>
<svg style="left:1862px;top:1065px;" width="9" height="5" viewBox="0 0 9 5"><path d="M0 4.4 H8 L4 0.2 Z" fill="#ffffff"/></svg>
<svg style="left:1890px;top:1059px;" width="15" height="16" viewBox="0 0 15 16"><path d="M7.4 0.8 C4.6 0.8 3.2 3 3.2 5.6 V9 L0.9 11.6 V12.6 H13.9 V11.6 L11.6 9 V5.6 C11.6 3 10.2 0.8 7.4 0.8 Z M5.6 13.4 C5.8 15.4 9 15.4 9.2 13.4 Z" fill="#dcdcdc"/></svg>
<div style="left:1544px;top:72px;width:348px;height:544px;background:#252526;border:1px solid #3f3f46;box-sizing:border-box;"></div>
<div style="left:1545px;top:73px;width:346px;height:49px;background:#2d2d30;"></div>
<span style="left:1549px;top:75.84px;font:normal 12px/16px 'Liberation Sans', sans-serif;color:#f1f1f1;white-space:pre;letter-spacing:-0.141px;">Solution Explorer</span>
<svg style="left:1646px;top:81px" width="190" height="6"><defs><pattern id="gp164683" width="4" height="4" patternUnits="userSpaceOnUse"><rect x="0" y="0" width="1" height="1" fill="#4a4a4f"/><rect x="2" y="2" width="1" height="1" fill="#4a4a4f"/></pattern></defs><rect width="190" height="5" fill="url(#gp164683)"/></svg>
<svg style="left:1843px;top:81px;" width="9" height="5" viewBox="0 0 9 5"><path d="M0 0 H8.4 L4.2 4.4 Z" fill="#f1f1f1"/></svg>
<svg style="left:1859px;top:77px;" width="10" height="13" viewBox="0 0 10 13"><path d="M2.5 1.5 H6.8 M2.5 1 V7.4 M4.3 7.4 V12.6" fill="none" stroke="#f1f1f1" stroke-width="1.1"/><path d="M1 7.4 H7.8" stroke="#f1f1f1" stroke-width="1.4"/><path d="M5.9 1 V7.4" stroke="#f1f1f1" stroke-width="1.8"/></svg>
<svg style="left:1875px;top:78px;" width="11" height="11" viewBox="0 0 11 11"><path d="M0.7 1 L9.9 9 M9.9 1 L0.7 9" stroke="#f1f1f1" stroke-width="1.5"/></svg>
<svg style="left:1552px;top:100px;" width="16" height="16" viewBox="0 0 16 16"><circle cx="8" cy="8" r="6.2" fill="#505054"/><path d="M12 8 H5.4 M8.3 4.6 L4.9 8 L8.3 11.4" stroke="#2d2d30" stroke-width="2" fill="none"/></svg>
<svg style="left:1574px;top:100px;" width="16" height="16" viewBox="0 0 16 16"><circle cx="8" cy="8" r="6.2" fill="#505054"/><path d="M4 8 H10.6 M7.7 4.6 L11.1 8 L7.7 11.4" stroke="#2d2d30" stroke-width="2" fill="none"/></svg>
<svg style="left:1596px;top:100px;" width="17" height="16" viewBox="0 0 17 16"><path d="M1.2 8.8 L8.3 1.7 L15.4 8.8" fill="none" stroke="#e4e4e4" stroke-width="1.7"/><path d="M11.6 1.2 V4.6" stroke="#e4e4e4" stroke-width="1.3"/><path d="M3 7.8 V14.2 H13.6 V7.8" fill="none" stroke="#e4e4e4" stroke-width="1.4"/><rect x="6.7" y="9.6" width="3.2" height="4.6" fill="#e4e4e4"/></svg>
<svg style="left:1618px;top:100px;" width="17" height="16" viewBox="0 0 17 16"><path d="M6.5 1.6 H14.5 V12.6 H10" fill="none" stroke="#d8d8d8" stroke-width="1.2"/><path d="M6.5 2.2 H14.5" stroke="#d8d8d8" stroke-width="2"/><path d="M10.2 5.5 H13 M10.2 7.8 H13 M10.2 10 H13 M8 5.5 H9" stroke="#d8d8d8" stroke-width="1"/><path d="M7.2 6.8 L3.6 9.9 L1.7 8.6 L0.8 9 V13.2 L1.7 13.6 L3.6 12.3 L7.2 15.4 L9.2 14.6 V7.6 Z M7 9.4 V12.8 L4.8 11.1 Z M1.8 10 V12.2 L3 11.1 Z" fill="#a557e0" fill-rule="evenodd"/></svg>
<div style="left:1641px;top:98px;width:1px;height:20px;background:#46464a;"></div>
<svg style="left:1650px;top:100px;" width="16" height="16" viewBox="0 0 16 16"><circle cx="9.2" cy="9.4" r="4.5" fill="none" stroke="#d8d8d8" stroke-width="1.3"/><path d="M9.2 6.6 V9.6 H11.8" fill="none" stroke="#d8d8d8" stroke-width="1.1"/><path d="M0.8 1.3 H6 V2 L4 4 V5.6 H2.8 V4 L0.8 2 Z" fill="#d8d8d8"/></svg>
<svg style="left:1671px;top:107px;" width="7" height="4" viewBox="0 0 7 4"><path d="M0 0 H6.4 L3.2 3.4 Z" fill="#999"/></svg>
<svg style="left:1683px;top:100px;" width="16" height="16" viewBox="0 0 16 16"><path d="M2 6.4 C3.4 2.2 9.5 1.6 12.6 5.2" fill="none" stroke="#75beff" stroke-width="2.2"/><path d="M14.4 0.8 V6.4 H8.8" fill="none" stroke="#75beff" stroke-width="2.2"/><path d="M14 9.6 C12.6 13.8 6.5 14.4 3.4 10.8" fill="none" stroke="#75beff" stroke-width="2.2"/><path d="M1.6 15.2 V9.6 H7.2" fill="none" stroke="#75beff" stroke-width="2.2"/></svg>
<svg style="left:1705px;top:100px;" width="16" height="16" viewBox="0 0 16 16"><path d="M8 4.4 C4.6 4.2 2.6 7 3 9.8 C3.6 13 7 14.4 9.8 13.2 C12.4 12 13.2 9.4 12.4 7.2" fill="none" stroke="#75beff" stroke-width="2.3"/><path d="M7 0.8 L11.8 4.2 L7.4 7.6 Z" fill="#75beff"/></svg>
<svg style="left:1727px;top:100px;" width="16" height="16" viewBox="0 0 16 16"><path d="M7.5 4.5 V2.5 H14.5 V9 H12.5 M5.5 6.5 V4.5 H12.5 V11 H10.5" fill="none" stroke="#d8d8d8" stroke-width="1"/><rect x="3.5" y="6.5" width="7" height="6.5" fill="none" stroke="#d8d8d8" stroke-width="1.3"/><path d="M5.2 9.8 H8.8" stroke="#75beff" stroke-width="1.4"/></svg>
<svg style="left:1749px;top:100px;" width="16" height="16" viewBox="0 0 16 16"><path d="M4.5 10.5 H1.5 V1.5 H6.5 L8 3" fill="none" stroke="#d8d8d8" stroke-width="1.1"/><path d="M8 2.5 H10.5 L14.5 6.5 V12" fill="none" stroke="#d8d8d8" stroke-width="1"/><path d="M4.5 4.5 H10 L12.5 7 V14.5 H4.5 Z" fill="#2d2d30" stroke="#d8d8d8" stroke-width="1.3"/><path d="M6.4 8.4 H10.6 M6.4 10.4 H10.6 M6.4 12.4 H9.4" stroke="#d8d8d8" stroke-width="1"/></svg>
<div style="left:1772px;top:98px;width:1px;height:20px;background:#46464a;"></div>
<svg style="left:1779px;top:101px;" width="16" height="14" viewBox="0 0 16 14"><path d="M6 3.2 L2.4 7 L6 10.8 M10 3.2 L13.6 7 L10 10.8" fill="none" stroke="#e4e4e4" stroke-width="1.9"/></svg>
<svg style="left:1801px;top:100px;" width="16" height="16" viewBox="0 0 16 16"><path d="M10.4 1.2 C8 1 6.2 3.4 7.2 5.8 L1.4 11.6 C0.4 12.8 2.4 15 3.8 13.8 L9.6 8 C12 9 14.6 7 14 4.4 L11.8 6.6 L9.6 6 L9 3.6 Z" fill="#d0d0d0" stroke="#d0d0d0" stroke-width="0.9" stroke-linejoin="round"/></svg>
<div style="left:1820px;top:96px;width:22px;height:24px;background:#2d2d30;border:1px solid #3794e8;box-sizing:border-box;"></div>
<svg style="left:1824px;top:103px;" width="15" height="9" viewBox="0 0 15 9"><path d="M0.5 7 H14 " stroke="#e0e0e0" stroke-width="1.4"/><rect x="7" y="2.6" width="7" height="4" fill="#e0e0e0"/></svg>
<div style="left:1545px;top:123px;width:346px;height:19px;background:#333337;"></div>
<div style="left:1545px;top:122px;width:346px;height:1px;background:#3f3f46;"></div>
<div style="left:1545px;top:142px;width:346px;height:1px;background:#3f3f46;"></div>
<div style="left:1879px;top:123px;width:12px;height:19px;background:#3f3f46;"></div>
<span style="left:1550.5px;top:124.84px;font:normal 12px/16px 'Liberation Sans', sans-serif;color:#999999;white-space:pre;letter-spacing:-0.184px;">Search Solution Explorer (Ctrl+;)</span>
<svg style="left:1862px;top:125px;" width="16" height="16" viewBox="0 0 16 16"><circle cx="9.7" cy="5.5" r="3.7" fill="none" stroke="#f1f1f1" stroke-width="2"/><path d="M7 8.3 L2.6 12.8" stroke="#f1f1f1" stroke-width="3" stroke-linecap="round"/></svg>
<svg style="left:1881px;top:131px;" width="7" height="4" viewBox="0 0 7 4"><path d="M0 0 H6.4 L3.2 3.4 Z" fill="#f1f1f1"/></svg>
<div style="left:1545px;top:145px;width:346px;height:18px;background:#1b1b1c;"></div>
<div style="left:1545px;top:163px;width:346px;height:18px;background:#3f3f46;"></div>
<svg style="left:1558px;top:146px;" width="18" height="18" viewBox="0 0 18 18"><path d="M3.5 9 V3.5 H14.5 V13.5 H10" fill="none" stroke="#d0d0d0" stroke-width="1.2"/><path d="M3.5 4.6 H14.5" stroke="#d0d0d0" stroke-width="1.6"/><path d="M7.6 8 L4.2 11 L2.4 9.8 L1.6 10.2 V14.4 L2.4 14.8 L4.2 13.6 L7.6 16.6 L9.4 15.8 V8.8 Z M7.4 10.6 V14 L5.2 12.3 Z" fill="#9b4fd6" fill-rule="evenodd"/></svg>
<span style="left:1580px;top:146.84px;font:normal 12px/16px 'Liberation Sans', sans-serif;color:#f1f1f1;white-space:pre;letter-spacing:-0.033px;">Solution 'CssUtilities' (1 of 1 project)</span>
<svg style="left:1555px;top:168px;" width="8" height="9" viewBox="0 0 8 9"><path d="M7 1 V8 H0.4 Z" fill="#f1f1f1"/></svg>
<svg style="left:1578px;top:167px" width="15" height="13" viewBox="0 0 15 13"><rect x="0.5" y="0.5" width="13" height="11" fill="none" stroke="#8ae28a" stroke-width="1"/><text x="2" y="9.2" font-family="Liberation Sans, sans-serif" font-size="8.6" fill="#d8d8d8" textLength="10" lengthAdjust="spacingAndGlyphs">C#</text></svg>
<span style="left:1597.5px;top:164.84px;font:bold 12px/16px 'Liberation Sans', sans-serif;color:#f1f1f1;white-space:pre;letter-spacing:-0.363px;">CssUtilities</span>
<svg style="left:1574px;top:186px;" width="7" height="10" viewBox="0 0 7 10"><path d="M0.7 0.8 L5.4 4.8 L0.7 8.8 Z" fill="none" stroke="#f1f1f1" stroke-width="1.15"/></svg>
<span style="left:1616px;top:183.14px;font:normal 12px/16px 'Liberation Sans', sans-serif;color:#f1f1f1;white-space:pre;letter-spacing:-0.170px;">Properties</span>
<svg style="left:1574px;top:204px;" width="7" height="10" viewBox="0 0 7 10"><path d="M0.7 0.8 L5.4 4.8 L0.7 8.8 Z" fill="none" stroke="#f1f1f1" stroke-width="1.15"/></svg>
<span style="left:1616px;top:201.14px;font:normal 12px/16px 'Liberation Sans', sans-serif;color:#f1f1f1;white-space:pre;letter-spacing:-0.438px;">References</span>
<svg style="left:1574px;top:222px;" width="7" height="10" viewBox="0 0 7 10"><path d="M0.7 0.8 L5.4 4.8 L0.7 8.8 Z" fill="none" stroke="#f1f1f1" stroke-width="1.15"/></svg>
<span style="left:1616px;top:219.14px;font:normal 12px/16px 'Liberation Sans', sans-serif;color:#f1f1f1;white-space:pre;letter-spacing:-0.484px;">Resources</span>
<svg style="left:1574px;top:240px;" width="7" height="10" viewBox="0 0 7 10"><path d="M0.7 0.8 L5.4 4.8 L0.7 8.8 Z" fill="none" stroke="#f1f1f1" stroke-width="1.15"/></svg>
<span style="left:1616px;top:237.14px;font:normal 12px/16px 'Liberation Sans', sans-serif;color:#f1f1f1;white-space:pre;letter-spacing:-0.222px;">ScriptingSession.cs</span>
<svg style="left:1574px;top:258px;" width="7" height="10" viewBox="0 0 7 10"><path d="M0.7 0.8 L5.4 4.8 L0.7 8.8 Z" fill="none" stroke="#f1f1f1" stroke-width="1.15"/></svg>
<span style="left:1616px;top:255.14px;font:normal 12px/16px 'Liberation Sans', sans-serif;color:#f1f1f1;white-space:pre;letter-spacing:-0.503px;">SetStyles.cs</span>
<svg style="left:1595px;top:183px;" width="16" height="16" viewBox="0 0 16 16"><path d="M10.4 1.2 C8 1 6.2 3.4 7.2 5.8 L1.4 11.6 C0.4 12.8 2.4 15 3.8 13.8 L9.6 8 C12 9 14.6 7 14 4.4 L11.8 6.6 L9.6 6 L9 3.6 Z" fill="#c4c4c4" stroke="#c4c4c4" stroke-width="0.9" stroke-linejoin="round"/></svg>
<svg style="left:1596px;top:202px;" width="14" height="14" viewBox="0 0 14 14"><rect x="5" y="1" width="3" height="3" fill="#c8c8c8"/><rect x="9.6" y="1" width="4" height="4" fill="#c8c8c8"/><rect x="1" y="5.6" width="3" height="3" fill="#c8c8c8"/><rect x="5.6" y="5.6" width="2" height="2" fill="#c8c8c8"/><rect x="6.6" y="8.6" width="4" height="4" fill="#c8c8c8"/><rect x="1" y="10" width="2" height="2" fill="#c8c8c8"/></svg>
<svg style="left:1595px;top:219.5px;" width="15" height="14" viewBox="0 0 15 14"><path d="M1 1.5 H6 L7 3 H13.6 V12.5 H1 Z" fill="#dcb67a"/></svg>
<svg style="left:1597px;top:239px" width="15" height="12"><text x="0.4" y="9.6" font-family="Liberation Sans, sans-serif" font-size="9.8" font-weight="bold" fill="#84dd84" stroke="#84dd84" stroke-width="0.3" textLength="12.2" lengthAdjust="spacingAndGlyphs">C#</text></svg>
<svg style="left:1597px;top:257px" width="15" height="12"><text x="0.4" y="9.6" font-family="Liberation Sans, sans-serif" font-size="9.8" font-weight="bold" fill="#84dd84" stroke="#84dd84" stroke-width="0.3" textLength="12.2" lengthAdjust="spacingAndGlyphs">C#</text></svg>
<div style="left:1544px;top:615px;width:101px;height:21px;background:#252526;border:1px solid #3f3f46;box-sizing:border-box;"></div>
<div style="left:1545px;top:615px;width:99px;height:1px;background:#252526;"></div>
<span style="left:1549.5px;top:616.84px;font:normal 12px/16px 'Liberation Sans', sans-serif;color:#0e97ff;white-space:pre;letter-spacing:-0.141px;">Solution Explorer</span>
<span style="left:1651px;top:616.84px;font:normal 12px/16px 'Liberation Sans', sans-serif;color:#f1f1f1;white-space:pre;letter-spacing:-0.246px;">Git Changes</span>
<div style="left:1544px;top:642px;width:348px;height:407px;background:#252526;border:1px solid #3f3f46;box-sizing:border-box;"></div>
<div style="left:1545px;top:643px;width:346px;height:21px;background:#2d2d30;"></div>
<span style="left:1549px;top:645.84px;font:normal 12px/16px 'Liberation Sans', sans-serif;color:#f1f1f1;white-space:pre;letter-spacing:-0.170px;">Properties</span>
<svg style="left:1610px;top:651px" width="226" height="6"><defs><pattern id="gp1610653" width="4" height="4" patternUnits="userSpaceOnUse"><rect x="0" y="0" width="1" height="1" fill="#4a4a4f"/><rect x="2" y="2" width="1" height="1" fill="#4a4a4f"/></pattern></defs><rect width="226" height="5" fill="url(#gp1610653)"/></svg>
<svg style="left:1843px;top:651px;" width="9" height="5" viewBox="0 0 9 5"><path d="M0 0 H8.4 L4.2 4.4 Z" fill="#f1f1f1"/></svg>
<svg style="left:1859px;top:647px;" width="10" height="13" viewBox="0 0 10 13"><path d="M2.5 1.5 H6.8 M2.5 1 V7.4 M4.3 7.4 V12.6" fill="none" stroke="#f1f1f1" stroke-width="1.1"/><path d="M1 7.4 H7.8" stroke="#f1f1f1" stroke-width="1.4"/><path d="M5.9 1 V7.4" stroke="#f1f1f1" stroke-width="1.8"/></svg>
<svg style="left:1875px;top:648px;" width="11" height="11" viewBox="0 0 11 11"><path d="M0.7 1 L9.9 9 M9.9 1 L0.7 9" stroke="#f1f1f1" stroke-width="1.5"/></svg>
<div style="left:1545px;top:664px;width:346px;height:24px;background:#333337;"></div>
<svg style="left:1882px;top:675px;" width="7" height="4" viewBox="0 0 7 4"><path d="M0 0 H6.4 L3.2 3.4 Z" fill="#f1f1f1"/></svg>
<div style="left:1545px;top:689px;width:346px;height:26px;background:#2d2d30;"></div>
<div style="left:1548px;top:690px;width:23px;height:22px;background:#2d2d30;border:1px solid #3794e8;box-sizing:border-box;"></div>
<svg style="left:1551px;top:693px;" width="17" height="16" viewBox="0 0 17 16"><rect x="0.7" y="0.7" width="5.3" height="5.3" fill="#d8d8d8"/><path d="M1.6 3.35 H5.1 M3.35 1.6 V5.1" stroke="#2d2d30" stroke-width="1.1"/><rect x="0.7" y="10" width="5.3" height="5.3" fill="#d8d8d8"/><path d="M1.6 12.65 H5.1 M3.35 10.9 V14.4" stroke="#2d2d30" stroke-width="1.1"/><path d="M7 1.5 H12 M7 3.5 H12 M7 5.5 H12 M7 7.5 H12 M7 9.5 H12 M7 12.5 H12 M7 14.5 H12 M13 3.5 H15 M13 5.5 H15 M13 7.5 H15 M13 9.5 H15 M13 14.5 H15" stroke="#d8d8d8" stroke-width="1"/></svg>
<svg style="left:1574px;top:693px" width="17" height="17"><rect x="0.7" y="0.8" width="7.3" height="7" fill="#d0d0d0"/><text x="1.5" y="7" font-family="Liberation Sans, sans-serif" font-size="7.6" font-weight="bold" fill="#2d2d30">A</text><text x="1.4" y="15.6" font-family="Liberation Sans, sans-serif" font-size="8.4" font-weight="bold" fill="#d0d0d0">Z</text><path d="M12.2 3.2 V10" stroke="#4fc3f7" stroke-width="2.2"/><path d="M9 8.4 L12.2 12.6 L15.4 8.4 Z" fill="#4fc3f7"/></svg>
<div style="left:1597px;top:692px;width:1px;height:20px;background:#3a3a3e;"></div>
<svg style="left:1602px;top:692px;" width="18" height="18" viewBox="0 0 18 18"><path d="M9.3 0.9 H13.7 L16.8 4 V8.4 L13.7 11.5 H10.6 L3.4 17 L0.9 14.4 L6.2 7.4 V4 Z" fill="#959595"/><path d="M11.4 5.6 L14 3" stroke="#777" stroke-width="2.2"/></svg>
<div style="left:1545px;top:985px;width:346px;height:1px;background:#333337;"></div>
<div style="left:1916px;top:72px;width:4px;height:68px;background:#3f3f46;"></div>
<span style="left:0;top:0;font:normal 12px/16px 'Liberation Sans', sans-serif;color:#d0d0d0;white-space:pre;transform-origin:0 0;transform:translate(1913.5px,72px) rotate(90deg);letter-spacing:0.163px;">Notifications</span>
<div style="left:157px;top:259px;width:90px;height:17px;border:2px solid #f8f400;box-sizing:border-box;"></div>
<div style="left:237px;top:275px;width:493px;height:48px;background:#424245;border:2px solid #f8f400;box-sizing:border-box;box-shadow:inset 0 0 0 1px #33334a;"></div>
<svg style="left:249px;top:284px;" width="17" height="17" viewBox="0 0 17 17"><path d="M5.1 0.6 L9.5 5 L5.1 9.4 L0.7 5 Z" fill="#f0c78a" stroke="#f0c78a" stroke-width="0.8" stroke-linejoin="round"/><path d="M13 4.2 L15.5 6.7 L13 9.2 L10.5 6.7 Z" fill="#f0c78a"/><path d="M12.3 10 L15.1 12.8 L12.3 15.6 L9.5 12.8 Z" fill="#f0c78a"/><path d="M8.6 6.4 H11.4 M7.9 7.4 V12.4 H10.4" fill="none" stroke="#f0c78a" stroke-width="1.2"/></svg>
<span style="left:269.5px;top:283.84px;font:normal 12px/16px 'Liberation Sans', sans-serif;color:#569cd6;white-space:pre;letter-spacing:-0.569px;">class</span>
<span style="left:297.5px;top:283.84px;font:normal 12px/16px 'Liberation Sans', sans-serif;color:#f1f1f1;white-space:pre;letter-spacing:-0.150px;">Grooper.</span>
<span style="left:343px;top:283.84px;font:normal 12px/16px 'Liberation Sans', sans-serif;color:#4ec9b0;white-space:pre;letter-spacing:-0.035px;">IconResourceAttribute</span>
<span style="left:464.5px;top:283.84px;font:normal 12px/16px 'Liberation Sans', sans-serif;color:#f1f1f1;white-space:pre;letter-spacing:-0.092px;">(+ 2 overloads)</span>
<span style="left:249px;top:299.84px;font:normal 12px/16px 'Liberation Sans', sans-serif;color:#f1f1f1;white-space:pre;letter-spacing:-0.066px;">Specifies the name of an image resource which should be used as the icon for the object.</span>
<svg style="left:700px;top:300px;overflow:visible" width="500" height="150" viewBox="700 300 500 150">
<defs><filter id="sh" x="-10%" y="-10%" width="130%" height="140%"><feGaussianBlur in="SourceAlpha" stdDeviation="2"/><feOffset dx="2" dy="3"/><feComponentTransfer><feFuncA type="linear" slope="0.55"/></feComponentTransfer><feMerge><feMergeNode/><feMergeNode in="SourceGraphic"/></feMerge></filter></defs>
<g filter="url(#sh)">
<path d="M800 392 L739 331.5" stroke="#f7931e" stroke-width="5" fill="none"/>
<path d="M718 311 L747.6 326.4 L733.4 340.2 Z" fill="#f7931e"/>
<circle cx="807.2" cy="398" r="19.5" fill="#f7931e"/>
<rect x="807" y="361" width="378" height="72" fill="#f7931e"/>
</g></svg>
<span style="left:801px;top:384.03px;font:bold 23px/28px 'Liberation Sans', sans-serif;color:#ffffff;white-space:pre;-webkit-text-stroke:0.45px #fff;transform:scaleX(0.8);transform-origin:0 0;">1</span>
<span style="left:823.9px;top:368.03px;font:bold 23px/28px 'Liberation Sans', sans-serif;color:#ffffff;white-space:pre;-webkit-text-stroke:0.45px #fff;letter-spacing:-0.019px;">Mouse-over</span>
<span style="left:958.9px;top:368.03px;font:bold 23px/28px 'Liberation Sans', sans-serif;color:#ffffff;white-space:pre;-webkit-text-stroke:0.45px #fff;letter-spacing:0.300px;">the</span>
<span style="left:1000px;top:368.03px;font:bold 23px/28px 'Liberation Sans', sans-serif;color:#ffffff;white-space:pre;-webkit-text-stroke:0.45px #fff;letter-spacing:-0.486px;">“IconResource”</span>
<span style="left:823.9px;top:396.03px;font:bold 23px/28px 'Liberation Sans', sans-serif;color:#ffffff;white-space:pre;-webkit-text-stroke:0.45px #fff;letter-spacing:-0.172px;">class</span>
<span style="left:886.2px;top:396.03px;font:bold 23px/28px 'Liberation Sans', sans-serif;color:#ffffff;white-space:pre;-webkit-text-stroke:0.45px #fff;letter-spacing:-0.009px;">to</span>
<span style="left:914.2px;top:396.03px;font:bold 23px/28px 'Liberation Sans', sans-serif;color:#ffffff;white-space:pre;-webkit-text-stroke:0.45px #fff;letter-spacing:0.100px;">get</span>
<span style="left:954.7px;top:396.03px;font:bold 23px/28px 'Liberation Sans', sans-serif;color:#ffffff;white-space:pre;-webkit-text-stroke:0.45px #fff;letter-spacing:-0.038px;">more</span>
<span style="left:1016.4px;top:396.03px;font:bold 23px/28px 'Liberation Sans', sans-serif;color:#ffffff;white-space:pre;-webkit-text-stroke:0.45px #fff;letter-spacing:-0.082px;">information</span>
</div></body></html>
